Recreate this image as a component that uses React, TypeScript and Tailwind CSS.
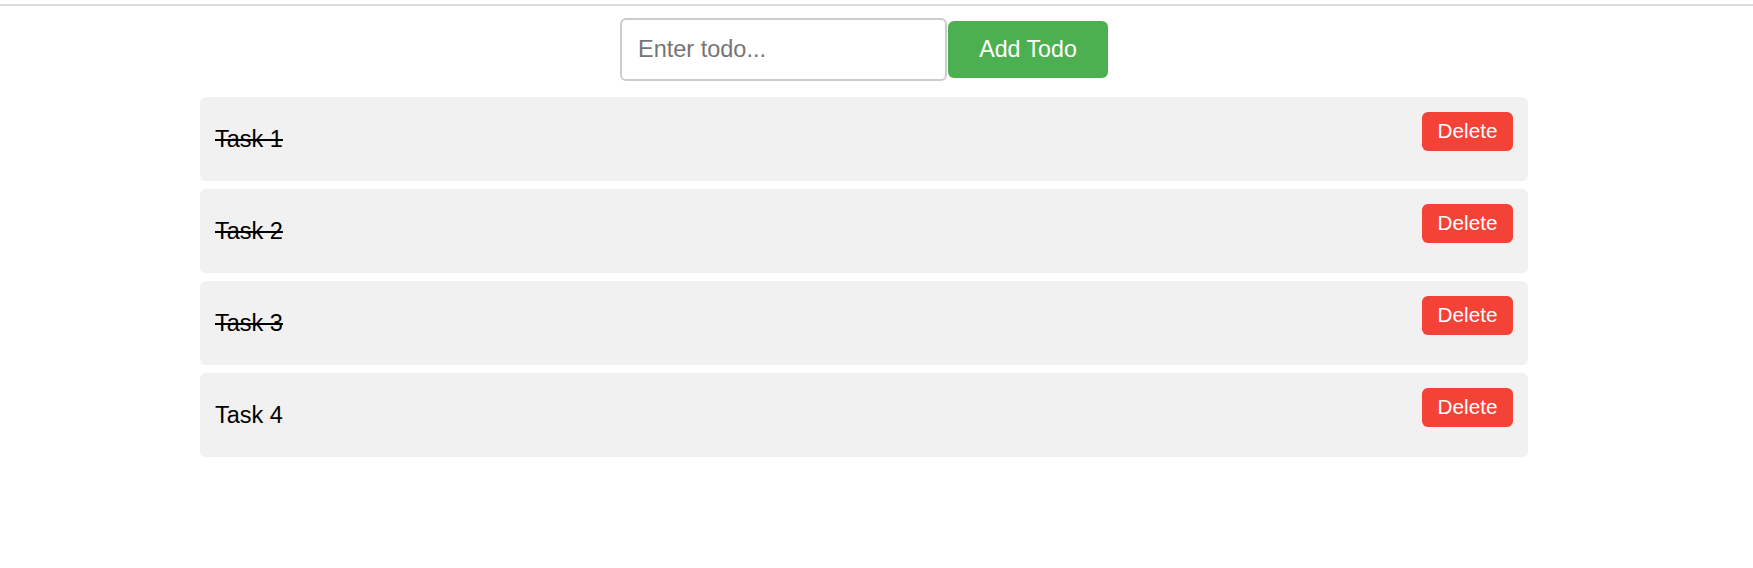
import React, { useState } from 'react';

interface Todo {
  id: number;
  text: string;
  done: boolean;
}

const initialTodos: Todo[] = [
  { id: 1, text: 'Task 1', done: true },
  { id: 2, text: 'Task 2', done: true },
  { id: 3, text: 'Task 3', done: true },
  { id: 4, text: 'Task 4', done: false },
];

const TodoItem: React.FC<{ todo: Todo; onToggle: () => void; onDelete: () => void }> = ({ todo, onToggle, onDelete }) => (
  <li className="flex justify-between items-center h-[84px] px-[15px] bg-[#f1f1f1] rounded-[6px]">
    <span
      onClick={onToggle}
      className={`text-[23.5px] text-black cursor-pointer mt-[1px] ${todo.done ? 'line-through' : ''}`}
    >
      {todo.text}
    </span>
    <button
      onClick={onDelete}
      className="self-start mt-[15px] w-[91px] h-[39px] bg-[#f44336] text-white text-[20.7px] rounded-[6px] leading-none"
    >
      Delete
    </button>
  </li>
);

export default function App() {
  const [todos, setTodos] = useState<Todo[]>(initialTodos);
  const [text, setText] = useState('');

  const addTodo = () => {
    if (!text.trim()) return;
    setTodos(prev => [...prev, { id: Date.now(), text, done: false }]);
    setText('');
  };

  const toggle = (id: number) => setTodos(prev => prev.map(t => (t.id === id ? { ...t, done: !t.done } : t)));
  const remove = (id: number) => setTodos(prev => prev.filter(t => t.id !== id));

  return (
    <div className="min-h-[568px] bg-white font-['Liberation_Sans',Arial,sans-serif]">
      <div className="h-[2px] mt-[4px] bg-[#dcdcdc]" />
      <div className="pr-[25px] flex flex-col items-center">
        <div className="flex items-center mt-[12px]">
          <input
            type="text"
            value={text}
            onChange={e => setText(e.target.value)}
            placeholder="Enter todo..."
            className="w-[327px] h-[63px] border-2 border-[#cccccc] rounded-[6px] px-[16px] text-[23.5px] text-black placeholder:text-[#757575] outline-none"
          />
          <button
            onClick={addTodo}
            className="ml-[1px] w-[160px] h-[57px] bg-[#4caf50] text-white text-[23.2px] rounded-[6px]"
          >
            Add Todo
          </button>
        </div>
        <ul className="w-[1328px] mt-[16px] flex flex-col gap-[8px]">
          {todos.map(todo => (
            <TodoItem key={todo.id} todo={todo} onToggle={() => toggle(todo.id)} onDelete={() => remove(todo.id)} />
          ))}
        </ul>
      </div>
    </div>
  );
}
